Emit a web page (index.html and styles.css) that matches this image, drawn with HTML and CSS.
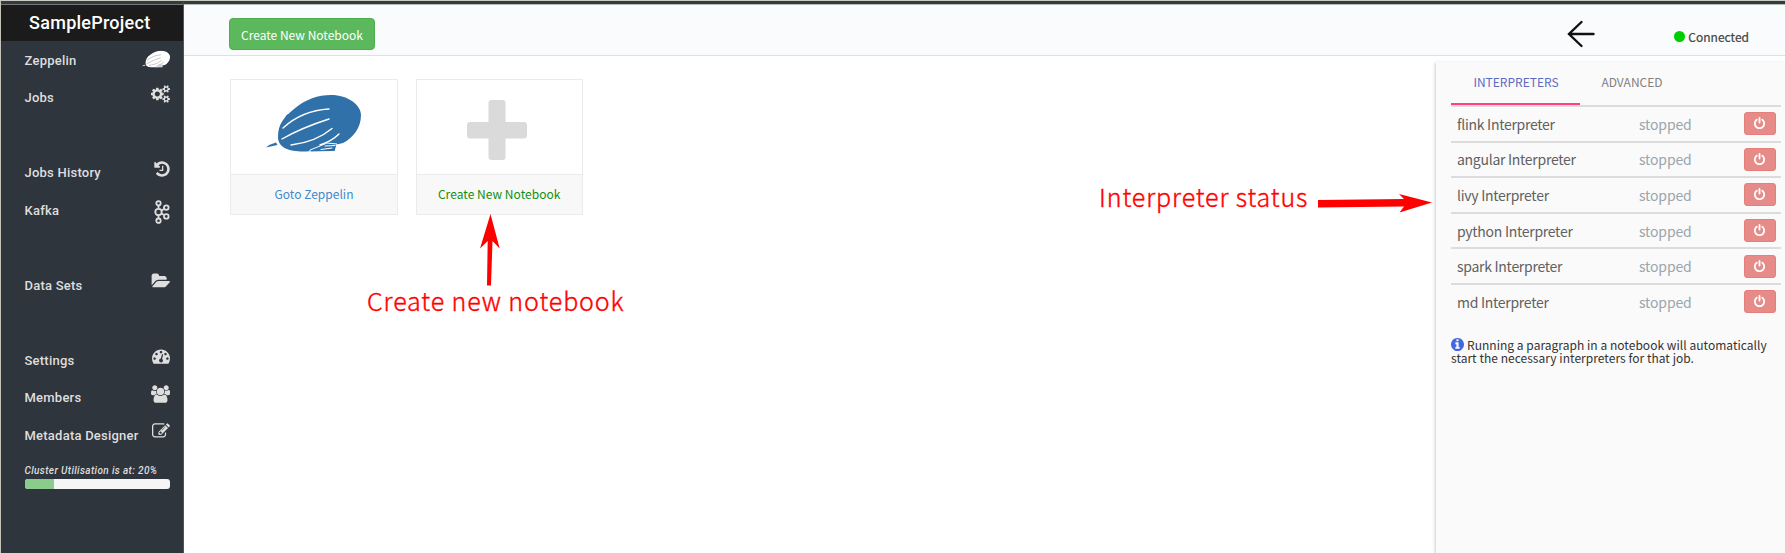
FILE: index.html
```html
<!DOCTYPE html>
<html lang="en">
<head>
<meta charset="utf-8">
<title>SampleProject</title>
<link rel="stylesheet" href="styles.css">
</head>
<body>
<svg class="sprite" width="0" height="0">
  <symbol id="power" viewBox="0 0 1792 1792"><path d="M1664 896q0 156-61 298t-164 245-245 164-298 61-298-61-245-164-164-245-61-298q0-182 80.500-343t226.500-270q43-32 95.500-25t83.500 50q32 42 24.500 94.500t-49.500 84.500q-98 74-151.500 181t-53.500 228q0 104 40.500 198.500t109.500 163.500 163.500 109.500 198.500 40.500 198.500-40.500 163.500-109.500 109.500-163.500 40.500-198.500q0-121-53.500-228t-151.500-181q-42-32-49.500-84.500t24.500-94.500q31-43 84-50t95 25q146 109 226.500 270t80.500 343zm-640-768v640q0 52-38 90t-90 38-90-38-38-90v-640q0-52 38-90t90-38 90 38 38 90z"/></symbol>
  <symbol id="zeppelin" viewBox="0 0 95 58">
    <path d="M12 43C12 30 18 23 28 15C40 5 52 1 65 1C82 1 95 11 95 21C95 34 87 44 77 49C66 51 56 57 40 57.500C24 58 12 54 12 43Z"/>
    <path d="M0 53.500Q4 50 10 48.500L11.500 51Z"/><path d="M19 26C19 20 24 18 24.500 22L21.500 25Z"/>
    <g class="seams"><path d="M17 34Q36 16.500 63 15"/><path d="M16 45Q35 34 63 25"/><path d="M25 51Q50 48 66 34.500"/><path d="M54 51Q66 47 73 40"/></g>
    <path class="cabin" d="M44 58V56L54 52L61 49L71 50L69 57.500Z"/><g class="seams thin"><path d="M55 55.500L66 54"/><path d="M59 52L69 51.500"/></g>
  </symbol>
</svg>
<div class="window">
  <aside class="sidebar">
    <h1 class="project">SampleProject</h1>
    <nav class="menu">
      <a class="item">Zeppelin<svg class="icon zep" viewBox="0 0 95 58"><use href="#zeppelin"/></svg></a>
      <a class="item gap-after">Jobs<svg class="icon" viewBox="0 0 1920 1792"><path d="M896 896q0-106-75-181t-181-75-181 75-75 181 75 181 181 75 181-75 75-181zm768 512q0-52-38-90t-90-38-90 38-38 90q0 53 37.500 90.500t90.500 37.500 90.500-37.500 37.500-90.500zm0-1024q0-52-38-90t-90-38-90 38-38 90q0 53 37.500 90.500t90.500 37.500 90.500-37.500 37.500-90.500zm-384 421v185q0 10-7 19.500t-16 10.500l-155 24q-11 35-32 76 34 48 90 115 7 11 7 20 0 12-7 19-23 30-82.500 89.500t-78.500 59.500q-11 0-21-7l-115-90q-37 19-77 31-11 108-23 155-7 24-30 24h-186q-11 0-20-7.500t-10-17.500l-23-153q-34-10-75-31l-118 89q-7 7-20 7-11 0-21-8-144-133-144-160 0-9 7-19 10-14 41-53t47-61q-23-44-35-82l-152-24q-10-1-17-9.500t-7-19.500v-185q0-10 7-19.500t16-10.500l155-24q11-35 32-76-34-48-90-115-7-11-7-20 0-12 7-20 22-30 82-89t79-59q11 0 21 7l115 90q34-18 77-32 11-108 23-154 7-24 30-24h186q11 0 20 7.500t10 17.500l23 153q34 10 75 31l118-89q8-7 20-7 11 0 21 8 144 133 144 160 0 8-7 19-12 16-42 54t-45 60q23 48 34 82l152 23q10 2 17 10.500t7 19.500zm640 533v140q0 16-149 31-12 27-30 52 51 113 51 138 0 4-4 7-122 71-124 71-8 0-46-47t-52-68q-20 2-30 2t-30-2q-14 21-52 68t-46 47q-2 0-124-71-4-3-4-7 0-25 51-138-18-25-30-52-149-15-149-31v-140q0-16 149-31 13-29 30-52-51-113-51-138 0-4 4-7 4-2 35-20t59-34 30-16q8 0 46 46.500t52 67.500q20-2 30-2t30 2q51-71 92-112l6-2q4 0 124 70 4 3 4 7 0 25-51 138 17 23 30 52 149 15 149 31zm0-1024v140q0 16-149 31-12 27-30 52 51 113 51 138 0 4-4 7-122 71-124 71-8 0-46-47t-52-68q-20 2-30 2t-30-2q-14 21-52 68t-46 47q-2 0-124-71-4-3-4-7 0-25 51-138-18-25-30-52-149-15-149-31v-140q0-16 149-31 13-29 30-52-51-113-51-138 0-4 4-7 4-2 35-20t59-34 30-16q8 0 46 46.500t52 67.500q20-2 30-2t30 2q51-71 92-112l6-2q4 0 124 70 4 3 4 7 0 25-51 138 17 23 30 52 149 15 149 31z"/></svg></a>
      <a class="item">Jobs History<svg class="icon history" viewBox="128 0 1536 1792"><path d="M1664 896q0 156-61 298t-164 245-245 164-298 61q-172 0-327-72.500t-264-204.500q-7-10-6.500-22.500t8.500-20.500l137-138q10-9 25-9 16 2 23 12 73 95 179 147t225 52q104 0 198.500-40.500t163.500-109.500 109.500-163.500 40.500-198.500-40.500-198.500-109.500-163.500-163.500-109.500-198.500-40.500q-98 0-188 35.500t-160 101.500l137 138q31 30 14 69-17 40-59 40h-448q-26 0-45-19t-19-45v-448q0-42 40-59 39-17 69 14l130 129q107-101 244.500-156.500t284.500-55.500q156 0 298 61t245 164 164 245 61 298zm-640-288v448q0 14-9 23t-23 9h-320q-14 0-23-9t-9-23v-64q0-14 9-23t23-9h224v-352q0-14 9-23t23-9h64q14 0 23 9t9 23z"/></svg></a>
      <a class="item gap-after">Kafka<svg class="icon kafka" viewBox="0 0 16 24"><g class="outline"><path d="M4.500 5.500V8M4.500 16v2.500M7.500 10.500L10 9M7.500 13.500L10 15"/><circle cx="4.500" cy="3.300" r="2.200"/><circle cx="4.500" cy="12" r="3.200"/><circle cx="4.500" cy="20.700" r="2.200"/><circle cx="12.300" cy="7.600" r="2.300"/><circle cx="12.300" cy="16.400" r="2.300"/></g></svg></a>
      <a class="item gap-after">Data Sets<svg class="icon" viewBox="0 0 1943 1792"><path d="M1943 952q0 31-31 66l-336 396q-43 51-120.500 86.500t-143.500 35.500h-1088q-34 0-60.500-13t-26.500-43q0-31 31-66l336-396q43-51 120.500-86.500t143.500-35.500h1088q34 0 60.500 13t26.500 43zm-343-344v160h-832q-94 0-197 47.500t-164 119.500l-337 396-5 6q0-4-.5-12.500t-.5-12.500v-960q0-92 66-158t158-66h320q92 0 158 66t66 158v32h544q92 0 158 66t66 158z"/></svg></a>
      <a class="item">Settings<svg class="icon dash" viewBox="0 0 1792 1792"><path d="M384 1152q0-53-37.500-90.500t-90.500-37.500-90.500 37.500-37.500 90.500 37.500 90.500 90.500 37.500 90.500-37.500 37.500-90.500zm192-448q0-53-37.500-90.500t-90.500-37.500-90.500 37.500-37.500 90.500 37.500 90.500 90.500 37.500 90.500-37.500 37.500-90.500zm428 481l101-382q6-26-7.500-48.500t-38.500-29.500-48 6.500-30 39.500l-101 382q-60 5-107 43.500t-63 98.500q-20 77 20 146t117 89 146-20 89-117q16-60-6-117t-72-91zm660-33q0-53-37.500-90.500t-90.500-37.500-90.500 37.500-37.500 90.500 37.500 90.500 90.500 37.500 90.500-37.500 37.500-90.500zm-640-640q0-53-37.500-90.500t-90.500-37.500-90.500 37.500-37.500 90.500 37.500 90.500 90.500 37.500 90.500-37.500 37.500-90.500zm448 192q0-53-37.500-90.500t-90.500-37.500-90.500 37.500-37.500 90.500 37.500 90.500 90.500 37.500 90.500-37.500 37.500-90.500zm320 448q0 261-141 483-19 29-54 29h-1402q-35 0-54-29-141-221-141-483 0-182 71-348t191-286 286-191 348-71 348 71 286 191 191 286 71 348z"/></svg></a>
      <a class="item">Members<svg class="icon" viewBox="0 0 1920 1792"><path d="M593 896q-162 5-265 128h-134q-82 0-138-40.500t-56-118.500q0-353 124-353 6 0 43.500 21t97.500 42.500 119 21.500q67 0 133-23-5 37-5 66 0 159 93 293zm1071 637q0 120-73 189.500t-194 69.500h-874q-121 0-194-69.500t-73-189.500q0-53 3.500-103.500t14-109 26.500-108.500 43-97.500 62-81 85.500-53.500 111.500-20q10 0 43 21.500t73 48 107 48 135 21.500 135-21.500 107-48 73-48 43-21.500q61 0 111.500 20t85.500 53.500 62 81 43 97.500 26.500 108.500 14 109 3.500 103.500zm-1024-1277q0 106-75 181t-181 75-181-75-75-181 75-181 181-75 181 75 75 181zm704 384q0 159-112.500 271.500t-271.500 112.500-271.500-112.500-112.500-271.500 112.500-271.500 271.500-112.500 271.500 112.500 112.500 271.500zm576 225q0 78-56 118.500t-138 40.500h-134q-103-123-265-128 93-134 93-293 0-29-5-66 66 23 133 23 59 0 119-21.500t97.500-42.500 43.500-21q124 0 124 353zm-128-609q0 106-75 181t-181 75-181-75-75-181 75-181 181-75 181 75 75 181z"/></svg></a>
      <a class="item">Metadata Designer<svg class="icon dash" viewBox="0 0 1792 1792"><path d="M888 1184l116-116-152-152-116 116v56h96v96h56zm440-720q-16-16-33 1l-350 350q-17 17-1 33t33-1l350-350q17-17 1-33zm80 594v190q0 119-84.500 203.500t-203.500 84.500h-832q-119 0-203.500-84.500t-84.500-203.500v-832q0-119 84.500-203.500t203.500-84.500h832q63 0 117 25 15 7 18 23 3 17-9 29l-49 49q-14 14-32 8-23-6-45-6h-832q-66 0-113 47t-47 113v832q0 66 47 113t113 47h832q66 0 113-47t47-113v-126q0-13 9-22l64-64q15-15 35-7t20 29zm-96-738l288 288-672 672h-288v-288zm444 132l-92 92-288-288 92-92q28-28 68-28t68 28l152 152q28 28 28 68t-28 68z"/></svg></a>
    </nav>
    <div class="usage">
      <div class="usage-label">Cluster Utilisation is at: 20%</div>
      <div class="meter"><div class="meter-fill" style="width:20%"></div></div>
    </div>
  </aside>
  <div class="page">
    <header class="topbar">
      <button class="create">Create New Notebook</button>
      <div class="status">
        <svg class="back" width="28" height="28" viewBox="0 0 28 28"><path d="M26.500 14H2M14.500 2L2 14L14.500 26"/></svg>
        <div class="connected"><i class="dot"></i><span>Connected</span></div>
      </div>
    </header>
    <div class="content">
      <main class="board">
        <div class="cards">
          <div class="card"><div class="art"><svg class="logo" width="95" height="58" viewBox="0 0 95 58"><use href="#zeppelin"/></svg></div><div class="caption">Goto Zeppelin</div></div>
          <div class="card"><div class="art"><svg class="plus" width="60" height="60" viewBox="0 0 60 60"><rect x="21.500" width="17" height="60" rx="3"/><rect y="22" width="60" height="16.500" rx="3"/></svg></div><div class="caption green">Create New Notebook</div></div>
        </div>
      </main>
      <section class="panel">
        <div class="tabs"><div class="tab active">INTERPRETERS</div><div class="tab">ADVANCED</div></div>
        <div class="list">
          <div class="row"><span class="name">flink Interpreter</span><span class="state">stopped</span><button class="power"><svg width="13" height="13"><use href="#power"/></svg></button></div>
          <div class="row"><span class="name">angular Interpreter</span><span class="state">stopped</span><button class="power"><svg width="13" height="13"><use href="#power"/></svg></button></div>
          <div class="row"><span class="name">livy Interpreter</span><span class="state">stopped</span><button class="power"><svg width="13" height="13"><use href="#power"/></svg></button></div>
          <div class="row"><span class="name">python Interpreter</span><span class="state">stopped</span><button class="power"><svg width="13" height="13"><use href="#power"/></svg></button></div>
          <div class="row"><span class="name">spark Interpreter</span><span class="state">stopped</span><button class="power"><svg width="13" height="13"><use href="#power"/></svg></button></div>
          <div class="row"><span class="name">md Interpreter</span><span class="state">stopped</span><button class="power"><svg width="13" height="13"><use href="#power"/></svg></button></div>
        </div>
        <p class="note"><svg class="info" width="13" height="13" viewBox="128 128 1536 1536"><path d="M1152 1376v-160q0-14-9-23t-23-9h-96v-512q0-14-9-23t-23-9h-320q-14 0-23 9t-9 23v160q0 14 9 23t23 9h96v320h-96q-14 0-23 9t-9 23v160q0 14 9 23t23 9h448q14 0 23-9t9-23zm-128-896v-160q0-14-9-23t-23-9h-192q-14 0-23 9t-9 23v160q0 14 9 23t23 9h192q14 0 23-9t9-23zm640 416q0 209-103 385.500t-279.500 279.500-385.500 103-385.500-103-279.500-279.500-103-385.500 103-385.500 279.500-279.500 385.500-103 385.500 103 279.500 279.500 103 385.500z"/></svg><span>Running a paragraph in a notebook will automatically</span><br><span>start the necessary interpreters for that job.</span></p>
      </section>
    </div>
  </div>
</div>
<div class="callout notebook">Create new notebook</div>
<div class="callout interp">Interpreter status</div>
<svg class="arrows" width="1785" height="553" viewBox="0 0 1785 553"><path d="M490.500 214L499.700 248.500L492.500 241L491 285.500H487L487.700 241L480 248.500Z"/><path d="M1318 200L1404 199L1399 194L1432 202.500L1399.500 212.500L1404 206.500L1318 207.500Z"/></svg>
</body>
</html>
```
FILE: styles.css
```css
* { box-sizing: border-box; }
body { margin: 0; width: 1785px; height: 553px; overflow: hidden; position: relative; background: #fff; font-family: "Noto Sans CJK SC", "Source Sans Pro", sans-serif; color: #333; }
button { font: inherit; border: 0; padding: 0; }
.sprite { position: absolute; }
.window { display: flex; height: 553px; border-top: 1px solid #cdcbc0; border-left: 1px solid #c5c3b9; }

.sidebar { width: 183px; flex: none; background: #2f353d; border-right: 1px solid #50555b; border-top: 3px solid #2f3d42; font-family: Roboto, sans-serif; font-weight: 500; color: #dedede; }
.project { margin: 0; height: 37px; background: #1b1b1b; border-top: 1px solid #777; color: #fff; font-size: 18px; font-weight: 500; letter-spacing: .25px; line-height: 36px; text-align: center; padding-right: 4.5px; }
.menu { display: flex; flex-direction: column; padding-top: .5px; }
.item { height: 37.5px; display: flex; align-items: center; justify-content: space-between; padding: 0 13px 0 23.5px; font-size: 13px; letter-spacing: .23px; }
.gap-after { margin-bottom: 37.5px; }
.icon { width: 19px; height: 18px; fill: #dedede; margin-bottom: 8px; }
.icon.zep { --seam: #777b80; width: 28px; height: 18px; margin-bottom: 2px; fill: #fff; }
.icon.history { width: 16px; }
.icon.kafka { width: 16px; height: 24px; margin: 4px 0 0; }
.icon.dash { width: 18px; }
.outline { fill: none; stroke: #dedede; stroke-width: 1.8; }
.seams { fill: none; stroke: var(--seam, #fff); stroke-width: 1.4; stroke-linecap: round; }
.seams.thin { stroke-width: 1; }
.cabin { stroke: var(--seam, #fff); stroke-width: 1; }
.usage { padding: 9.5px 13px 0 23.5px; }
.usage-label { font-size: 10px; font-style: italic; letter-spacing: .38px; line-height: 14px; margin-bottom: 1.5px; white-space: nowrap; }
.meter { height: 9.5px; border-radius: 3px; background: #f5f5f5; overflow: hidden; }
.meter-fill { height: 100%; background: #8bcb8b; }

.page { flex: 1; display: flex; flex-direction: column; min-width: 0; }
.topbar { height: 55px; flex: none; background: #fafbfd; border-top: 3px solid #2f3d42; border-bottom: 1px solid #d9e3e5; display: flex; justify-content: space-between; align-items: flex-start; padding: 14px 36px 0 45px; box-shadow: inset 0 1px 0 #b9bbbb; }
.create { width: 146px; height: 32px; border: 1px solid #4cae4c; border-radius: 4px; background: #5cb85c; color: #fff; font-size: 12px; letter-spacing: 0; }
.status { display: flex; }
.back { margin: 1.500px 79px 0 0; fill: none; stroke: #111; stroke-width: 2.4; stroke-linecap: round; }
.connected { display: flex; align-items: center; gap: 3px; height: 37px; font-size: 12px; letter-spacing: 0; color: #444; -webkit-text-stroke: .2px #444; }
.dot { width: 11px; height: 11px; border-radius: 50%; background: #00cd00; }
.content { flex: 1; display: flex; }
.board { flex: 1; padding: 23px 0 0 46.4px; }
.cards { display: flex; gap: 18px; }
.card { width: 167.2px; height: 135.500px; border: 1px solid #e9eceb; display: flex; flex-direction: column; }
.art { height: 94px; display: flex; justify-content: center; }
.logo { fill: #3071a9; margin: 13.500px 0 0; }
.plus { fill: #dadada; margin: 19.500px 5px 0 0; }
.caption { flex: 1; background: #f8f8f8; border-top: 1px solid #e9eceb; display: flex; align-items: center; justify-content: center; font-size: 12px; letter-spacing: .03px; color: #428bca; padding-bottom: 2px; }
.caption.green { color: #119011; }
.panel { width: 349px; margin-top: 6px; background: #fafafa; box-shadow: -1px 1px 3px rgba(0,0,0,.2); padding: 0 4px 0 15px; }
.tabs { display: flex; height: 43px; }
.tab { width: 101px; text-align: center; line-height: 40px; font-size: 12px; color: #818181; padding-left: 3px; }
.tab.active { width: 129px; color: #5c6bc0; border-bottom: 2px solid #ff4081; padding: 0 0 0 1px; }
.list { border-top: 2px solid #dcdcdc; }
.row { display: flex; align-items: center; height: 35.6px; border-bottom: 2px solid #dcdcdc; padding: 0 5px 0 6px; font-size: 14px; color: #616161; }
.row:last-child { border-bottom: 0; height: 33.6px; }
.name { width: 182px; letter-spacing: -.28px; }
.state { flex: 1; color: #9aa5ac; letter-spacing: -.15px; }
.power { width: 32px; height: 23px; border-radius: 3px; border: 1px solid #e57f7b; background: #e68b88; display: flex; align-items: center; justify-content: center; padding-right: 1px; }
.power svg { fill: #fff; }
.note { margin: 19px 0 0; font-size: 12px; line-height: 13.500px; letter-spacing: .03px; color: #333; white-space: nowrap; }
.info { fill: #4267e0; vertical-align: -1px; margin-right: 3px; }

.callout { position: absolute; color: #f00; font-size: 25px; line-height: 36px; white-space: nowrap; font-weight: 300; letter-spacing: .9px; -webkit-text-stroke: .4px #f00; }
.notebook { left: 367px; top: 282px; }
.interp { left: 1099px; top: 178px; }
.arrows { position: absolute; left: 0; top: 0; fill: #f00; pointer-events: none; }
```
